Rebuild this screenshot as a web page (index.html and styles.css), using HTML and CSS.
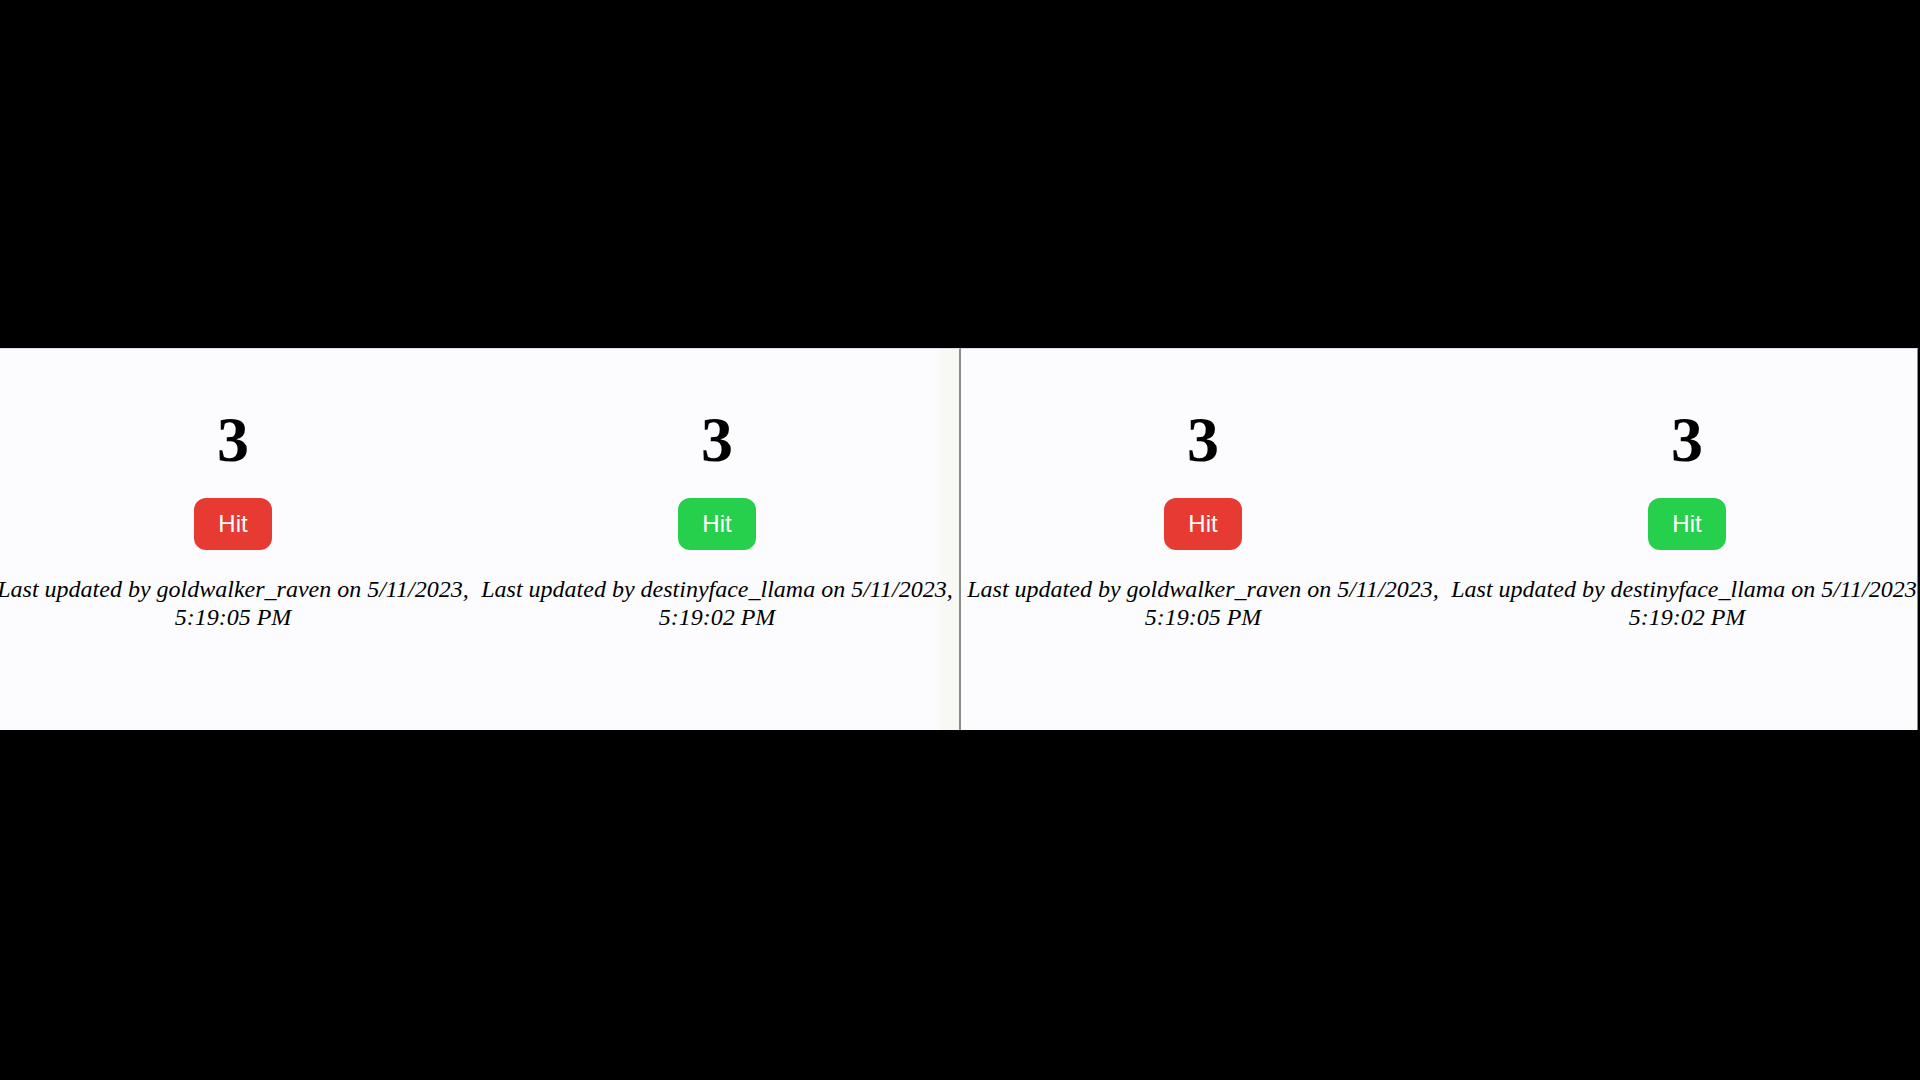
FILE: index.html
```html
<!DOCTYPE html>
<html>
<head>
<meta charset="utf-8">
<link rel="stylesheet" href="styles.css">
</head>
<body>
<div class="stage">
  <div class="panel panel-left">
    <div class="counters">
      <div class="counter">
        <div class="count">3</div>
        <button class="hit hit-red">Hit</button>
        <p class="updated">Last updated by goldwalker_raven on 5/11/2023, 5:19:05 PM</p>
      </div>
      <div class="counter">
        <div class="count">3</div>
        <button class="hit hit-green">Hit</button>
        <p class="updated">Last updated by destinyface_llama on 5/11/2023, 5:19:02 PM</p>
      </div>
    </div>
  </div>
  <div class="panel panel-right">
    <div class="counters">
      <div class="counter">
        <div class="count">3</div>
        <button class="hit hit-red">Hit</button>
        <p class="updated">Last updated by goldwalker_raven on 5/11/2023, 5:19:05 PM</p>
      </div>
      <div class="counter">
        <div class="count">3</div>
        <button class="hit hit-green">Hit</button>
        <p class="updated">Last updated by destinyface_llama on 5/11/2023, 5:19:02 PM</p>
      </div>
    </div>
  </div>
</div>
</body>
</html>
```
FILE: styles.css
```css
html, body {
  margin: 0;
  padding: 0;
  background: #000;
  height: 100%;
}
body {
  display: flex;
  flex-direction: column;
  justify-content: flex-start;
}
.stage {
  margin-top: 348px;
  height: 382px;
  display: flex;
  width: 1918px;
}
.panel {
  height: 100%;
  background: #fcfcfe;
  overflow: hidden;
  box-sizing: border-box;
  border-top: 1px solid #dcdce8;
  font-family: "Liberation Serif", "Times New Roman", serif;
  color: #000;
}
.panel-left {
  width: 961px;
  border-right: 2px solid #8a8a8a;
  background: linear-gradient(to right, #fcfcfe 0, #fcfcfe 939px, #f8f8f4 941px, #f8f8f4 959px);
}
.panel-left .counters {
  margin-left: -9px;
}
.panel-right {
  width: 957px;
  border-right: 1px solid #8a8a8a;
}
.counters {
  display: grid;
  grid-template-columns: 484px 484px;
  padding-top: 59px;
}
.counter {
  display: flex;
  flex-direction: column;
  align-items: center;
  min-width: 0;
}
.count {
  font-size: 64px;
  font-weight: bold;
  line-height: 64px;
  height: 64px;
}
.hit {
  margin-top: 26px;
  width: 78px;
  height: 52px;
  border: none;
  border-radius: 12px;
  color: #fff;
  font-family: "Liberation Sans", Arial, sans-serif;
  font-size: 24px;
  padding: 0;
  cursor: pointer;
}
.hit-red {
  background: #e63a32;
}
.hit-green {
  background: #27d04c;
}
.updated {
  margin: 25px 0 0 0;
  width: 484px;
  text-align: center;
  font-style: italic;
  font-size: 24px;
  line-height: 28px;
}
```
